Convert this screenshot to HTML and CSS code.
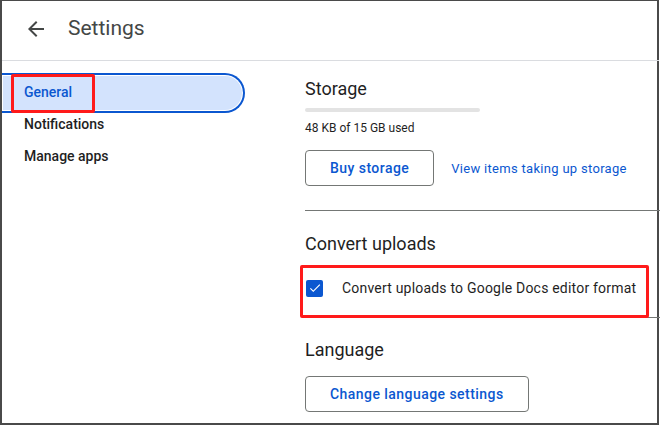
FILE: index.html
```html
<!DOCTYPE html>
<html>
<head>
<meta charset="utf-8">
<link rel="stylesheet" href="styles.css">
</head>
<body>
<div class="frame">
  <header class="header">
    <svg class="back" width="24" height="24" viewBox="0 0 24 24"><path d="M20 11H7.83l5.59-5.59L12 4l-8 8 8 8 1.41-1.41L7.83 13H20v-2z" fill="#444746"/></svg>
    <h1 class="title">Settings</h1>
  </header>
  <div class="main">
    <nav class="nav">
      <div class="nav-item selected">General</div>
      <div class="nav-item notif">Notifications</div>
      <div class="nav-item apps">Manage apps</div>
      <div class="mark mark-nav"></div>
    </nav>
    <section class="content">
      <h2 class="sec-title">Storage</h2>
      <div class="bar"></div>
      <div class="usage">48 KB of 15 GB used</div>
      <div class="actions">
        <button class="btn">Buy storage</button>
        <a class="link">View items taking up storage</a>
      </div>
      <div class="sep"></div>
      <h2 class="sec-title convert">Convert uploads</h2>
      <div class="check-row">
        <span class="checkbox"><svg width="14" height="14" viewBox="0 0 24 24"><path d="M9 16.2 4.8 12l-1.4 1.4L9 19 21 7l-1.4-1.4z" fill="#fff"/></svg></span>
        <span class="check-label">Convert uploads to Google Docs editor format</span>
        <div class="mark mark-check"></div>
      </div>
      <div class="sep sep2"></div>
      <h2 class="sec-title lang">Language</h2>
      <button class="btn btn-lang">Change language settings</button>
    </section>
  </div>
</div>
</body>
</html>
```
FILE: styles.css
```css
* { box-sizing: border-box; }
body {
  margin: 0;
  font-family: Roboto, "Noto Sans", sans-serif;
  background: #fff;
}
.frame {
  width: 659px;
  height: 425px;
  border: 2px solid #4a4a4a;
  border-top-width: 1px;
  position: relative;
  overflow: visible;
}
.header {
  height: 60px;
  border-bottom: 1px solid #dadce0;
  display: flex;
  align-items: center;
  padding-left: 22px;
  margin-right: -2px;
}
.back { display: block; margin-top: -3px; }
.title {
  margin: 0 0 0 20px;
  font-size: 21px;
  font-weight: 400;
  color: #444746;
  margin-top: -6px;
}
.main {
  display: flex;
}
.nav {
  width: 303px;
  padding-top: 12px;
  position: relative;
  flex: none;
}
.nav-item {
  font-size: 14px;
  font-weight: 500;
  color: #1f1f1f;
  line-height: 24px;
  padding-left: 22px;
}
.nav-item.selected {
  width: 243px;
  height: 40px;
  line-height: 34px;
  padding-bottom: 2px;
  color: #0b57d0;
  background: #d3e3fd;
  border: 2px solid #0b57d0;
  border-left: none;
  border-radius: 0 20px 20px 0;
  box-shadow: inset 0 0 0 1px #fff;
}
.notif { margin-top: -1px; }
.apps { margin-top: 8px; }
.mark {
  position: absolute;
  border: 3px solid #ff1a1a;
  border-radius: 2px;
}
.mark-nav {
  left: 9px;
  top: 13px;
  width: 84px;
  height: 39px;
}
.content {
  flex: 1;
  margin-right: -4px;
  padding-top: 16px;
}
.sec-title {
  margin: 0;
  font-size: 18px;
  font-weight: 400;
  line-height: 24px;
  color: #1f1f1f;
}
.bar {
  width: 175px;
  height: 4px;
  border-radius: 2px;
  background: #e3e3e3;
  margin-top: 7px;
}
.usage {
  margin-top: 8px;
  font-size: 12px;
  line-height: 16px;
  color: #1f1f1f;
}
.actions {
  margin-top: 14px;
  display: flex;
  align-items: center;
}
.btn {
  height: 36px;
  padding: 0 24px;
  border: 1px solid #747775;
  border-radius: 4px;
  background: #fff;
  color: #0b57d0;
  font-family: Roboto, sans-serif;
  font-size: 14px;
  font-weight: 500;
  letter-spacing: 0.45px;
}
.link {
  margin-left: 17px;
  font-size: 13px;
  letter-spacing: 0.3px;
  color: #0b57d0;
}
.sep {
  height: 1px;
  background: #747775;
  margin-top: 24px;
}
.convert { margin-top: 21px; }
.check-row {
  position: relative;
  margin-top: 20px;
  display: flex;
  align-items: center;
  height: 24px;
}
.checkbox {
  width: 17px;
  height: 17px;
  margin-left: 1px;
  border-radius: 2px;
  background: #0b57d0;
  display: flex;
  align-items: center;
  justify-content: center;
}
.check-label {
  margin-left: 19px;
  font-size: 14px;
  color: #1f1f1f;
  letter-spacing: 0.2px;
}
.mark-check {
  left: -5px;
  top: -11px;
  width: 349px;
  height: 53px;
}
.sep2 { margin-top: 17px; }
.lang { margin-top: 20px; }
.btn-lang { margin-top: 14px; }
```
